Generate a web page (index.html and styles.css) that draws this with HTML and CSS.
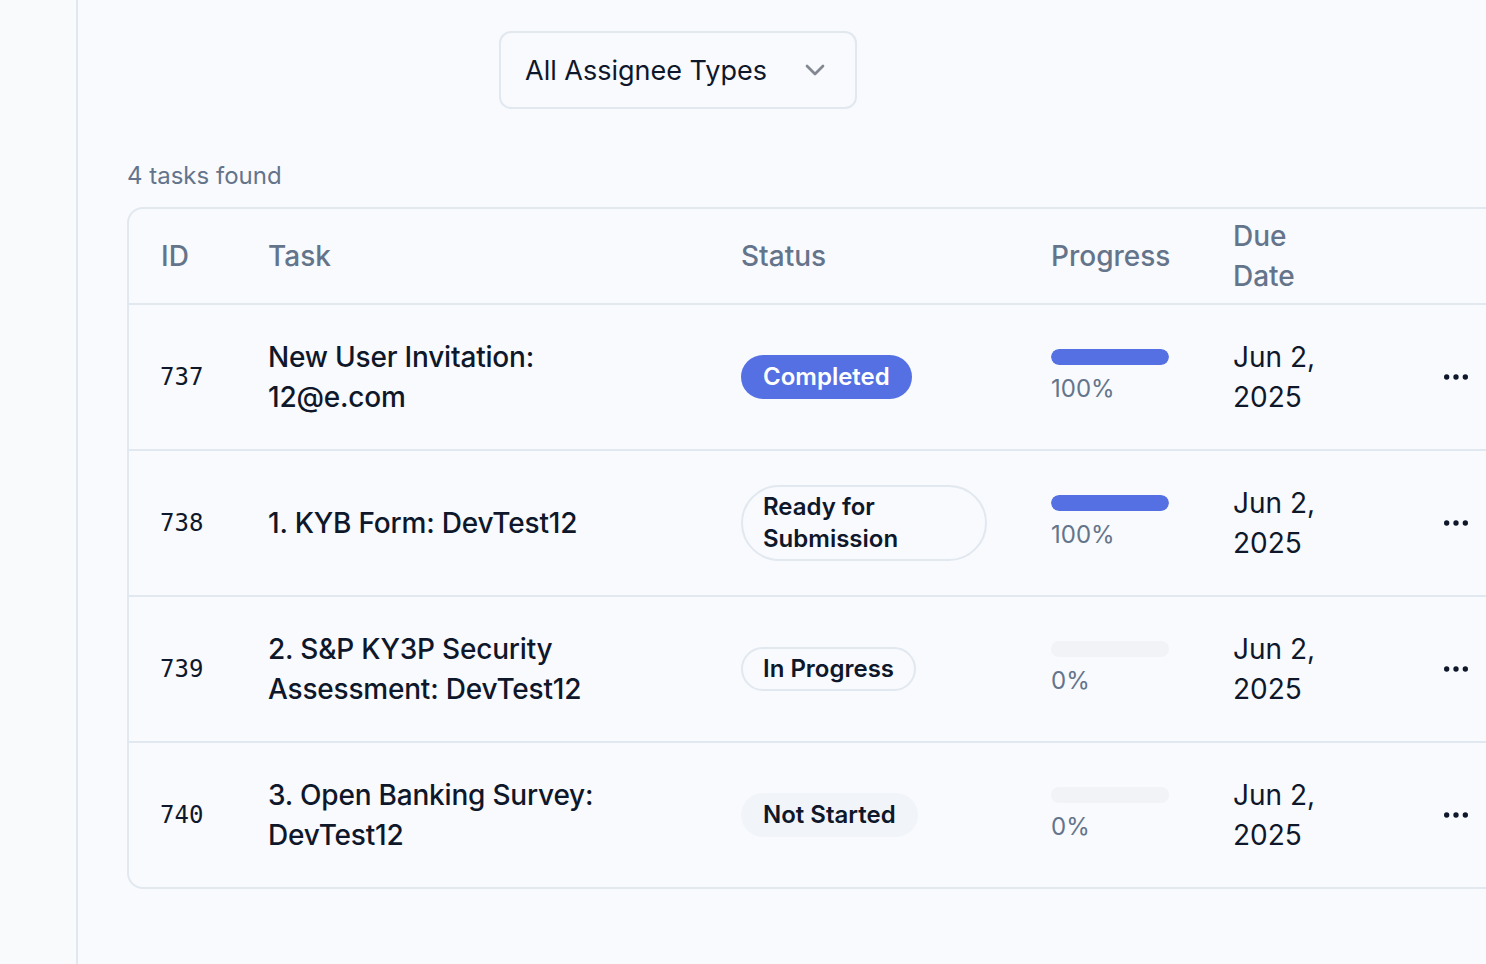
FILE: index.html
```html
<!DOCTYPE html>
<html lang="en">
<head>
<meta charset="utf-8">
<title>Tasks</title>
<link rel="stylesheet" href="styles.css">
</head>
<body>
<div class="app">
  <aside class="sidebar"></aside>
  <main class="main">
    <div class="filters">
      <button class="select" type="button">
        <span class="select-label">All Assignee Types</span>
        <svg class="chev" width="32" height="32" viewBox="0 0 24 24" fill="none" stroke="currentColor" stroke-width="2" stroke-linecap="round" stroke-linejoin="round"><path d="m6 9 6 6 6-6"/></svg>
      </button>
    </div>
    <p class="count">4 tasks found</p>
    <div class="table-wrap">
      <table class="tasks">
        <colgroup>
          <col class="c-id"><col class="c-task"><col class="c-status"><col class="c-prog"><col class="c-due"><col class="c-act">
        </colgroup>
        <thead>
          <tr>
            <th>ID</th><th>Task</th><th>Status</th><th>Progress</th><th>Due Date</th><th></th>
          </tr>
        </thead>
        <tbody>
          <tr>
            <td class="id">737</td>
            <td class="task">New User Invitation: 12@e.com</td>
            <td><span class="badge badge-done">Completed</span></td>
            <td><div class="bar"><div class="fill" style="width:100%"></div></div><div class="pct">100%</div></td>
            <td class="due">Jun 2, 2025</td>
            <td class="act"><svg width="32" height="32" viewBox="0 0 24 24" fill="none" stroke="currentColor" stroke-width="2"><circle cx="12" cy="12" r="1"/><circle cx="19" cy="12" r="1"/><circle cx="5" cy="12" r="1"/></svg></td>
          </tr>
          <tr>
            <td class="id">738</td>
            <td class="task">1. KYB Form: DevTest12</td>
            <td><span class="badge badge-outline badge-wrap">Ready for Submission</span></td>
            <td><div class="bar"><div class="fill" style="width:100%"></div></div><div class="pct">100%</div></td>
            <td class="due">Jun 2, 2025</td>
            <td class="act"><svg width="32" height="32" viewBox="0 0 24 24" fill="none" stroke="currentColor" stroke-width="2"><circle cx="12" cy="12" r="1"/><circle cx="19" cy="12" r="1"/><circle cx="5" cy="12" r="1"/></svg></td>
          </tr>
          <tr>
            <td class="id">739</td>
            <td class="task">2. S&amp;P KY3P Security Assessment: DevTest12</td>
            <td><span class="badge badge-outline">In Progress</span></td>
            <td><div class="bar"><div class="fill" style="width:0%"></div></div><div class="pct">0%</div></td>
            <td class="due">Jun 2, 2025</td>
            <td class="act"><svg width="32" height="32" viewBox="0 0 24 24" fill="none" stroke="currentColor" stroke-width="2"><circle cx="12" cy="12" r="1"/><circle cx="19" cy="12" r="1"/><circle cx="5" cy="12" r="1"/></svg></td>
          </tr>
          <tr>
            <td class="id">740</td>
            <td class="task">3. Open Banking Survey: DevTest12</td>
            <td><span class="badge badge-muted">Not Started</span></td>
            <td><div class="bar"><div class="fill" style="width:0%"></div></div><div class="pct">0%</div></td>
            <td class="due">Jun 2, 2025</td>
            <td class="act"><svg width="32" height="32" viewBox="0 0 24 24" fill="none" stroke="currentColor" stroke-width="2"><circle cx="12" cy="12" r="1"/><circle cx="19" cy="12" r="1"/><circle cx="5" cy="12" r="1"/></svg></td>
          </tr>
        </tbody>
      </table>
    </div>
  </main>
</div>
</body>
</html>
```
FILE: styles.css
```css
* { box-sizing: border-box; }
html, body {
  margin: 0;
  height: 100%;
  background: #f8fafd;
  font-family: Inter, "Noto Sans", sans-serif;
  color: #0f172a;
}
.app {
  display: flex;
  height: 964px;
  overflow: hidden;
}
.sidebar {
  width: 78px;
  flex: none;
  background: #f8fafc;
  border-right: 2px solid #e2e8f0;
}
.main {
  flex: 1;
  min-width: 0;
  padding: 31px 0 0 49px;
  overflow: hidden;
}
.filters {
  display: flex;
  padding-left: 372px;
}
.select {
  display: flex;
  align-items: center;
  justify-content: space-between;
  width: 358px;
  height: 78px;
  padding: 0 24px 0 24px;
  background: #f8fafd;
  border: 2px solid #e2e8f0;
  border-radius: 12px;
  font-family: inherit;
  font-size: 27px;
  color: #0f172a;
  cursor: pointer;
}
.chev {
  color: #0f172a;
  opacity: 0.5;
}
.count {
  margin: 51px 0 15px;
  font-size: 24px;
  line-height: 32px;
  color: #64748b;
}
.table-wrap {
  width: 1386px;
  border: 2px solid #e2e8f0;
  border-radius: 16px;
  overflow: hidden;
}
.tasks {
  width: 1382px;
  table-layout: fixed;
  border-collapse: collapse;
  font-size: 28px;
  line-height: 40px;
}
.c-id { width: 107px; }
.c-task { width: 473px; }
.c-status { width: 310px; }
.c-prog { width: 182px; }
.c-due { width: 150px; }
.c-act { width: 160px; }
.tasks th {
  height: 95px;
  padding: 0 32px;
  text-align: left;
  vertical-align: middle;
  font-weight: 500;
  color: #64748b;
  border-bottom: 2px solid #e2e8f0;
}
.tasks td {
  padding: 32px;
  vertical-align: middle;
  border-bottom: 2px solid #e2e8f0;
}
.tasks tbody tr:last-child td { border-bottom: none; }
.tasks td.id {
  font-family: "DejaVu Sans Mono", "Liberation Mono", monospace;
  font-size: 24px;
  padding-left: 31px;
}
.tasks td.task { font-weight: 500; letter-spacing: -0.2px; }
.badge {
  display: inline-block;
  padding: 4px 20px;
  border: 2px solid transparent;
  border-radius: 9999px;
  font-size: 24px;
  line-height: 32px;
  font-weight: 600;
}
.badge-done { background: #5470e3; color: #fff; }
.badge-outline { border-color: #e2e8f0; color: #0f172a; }
.badge-wrap { width: 246px; }
.badge-muted { background: #f1f5f9; color: #0f172a; }
.bar {
  width: 118px;
  height: 16px;
  border-radius: 9999px;
  background: #f1f3f7;
  overflow: hidden;
}
.fill { height: 100%; background: #5470e3; border-radius: 9999px; }
.pct {
  margin-top: 8px;
  font-size: 24px;
  line-height: 32px;
  color: #64748b;
}
.tasks td.act {
  text-align: right;
  padding-right: 39px;
  line-height: 0;
}
.act svg { color: #0f172a; }
```
